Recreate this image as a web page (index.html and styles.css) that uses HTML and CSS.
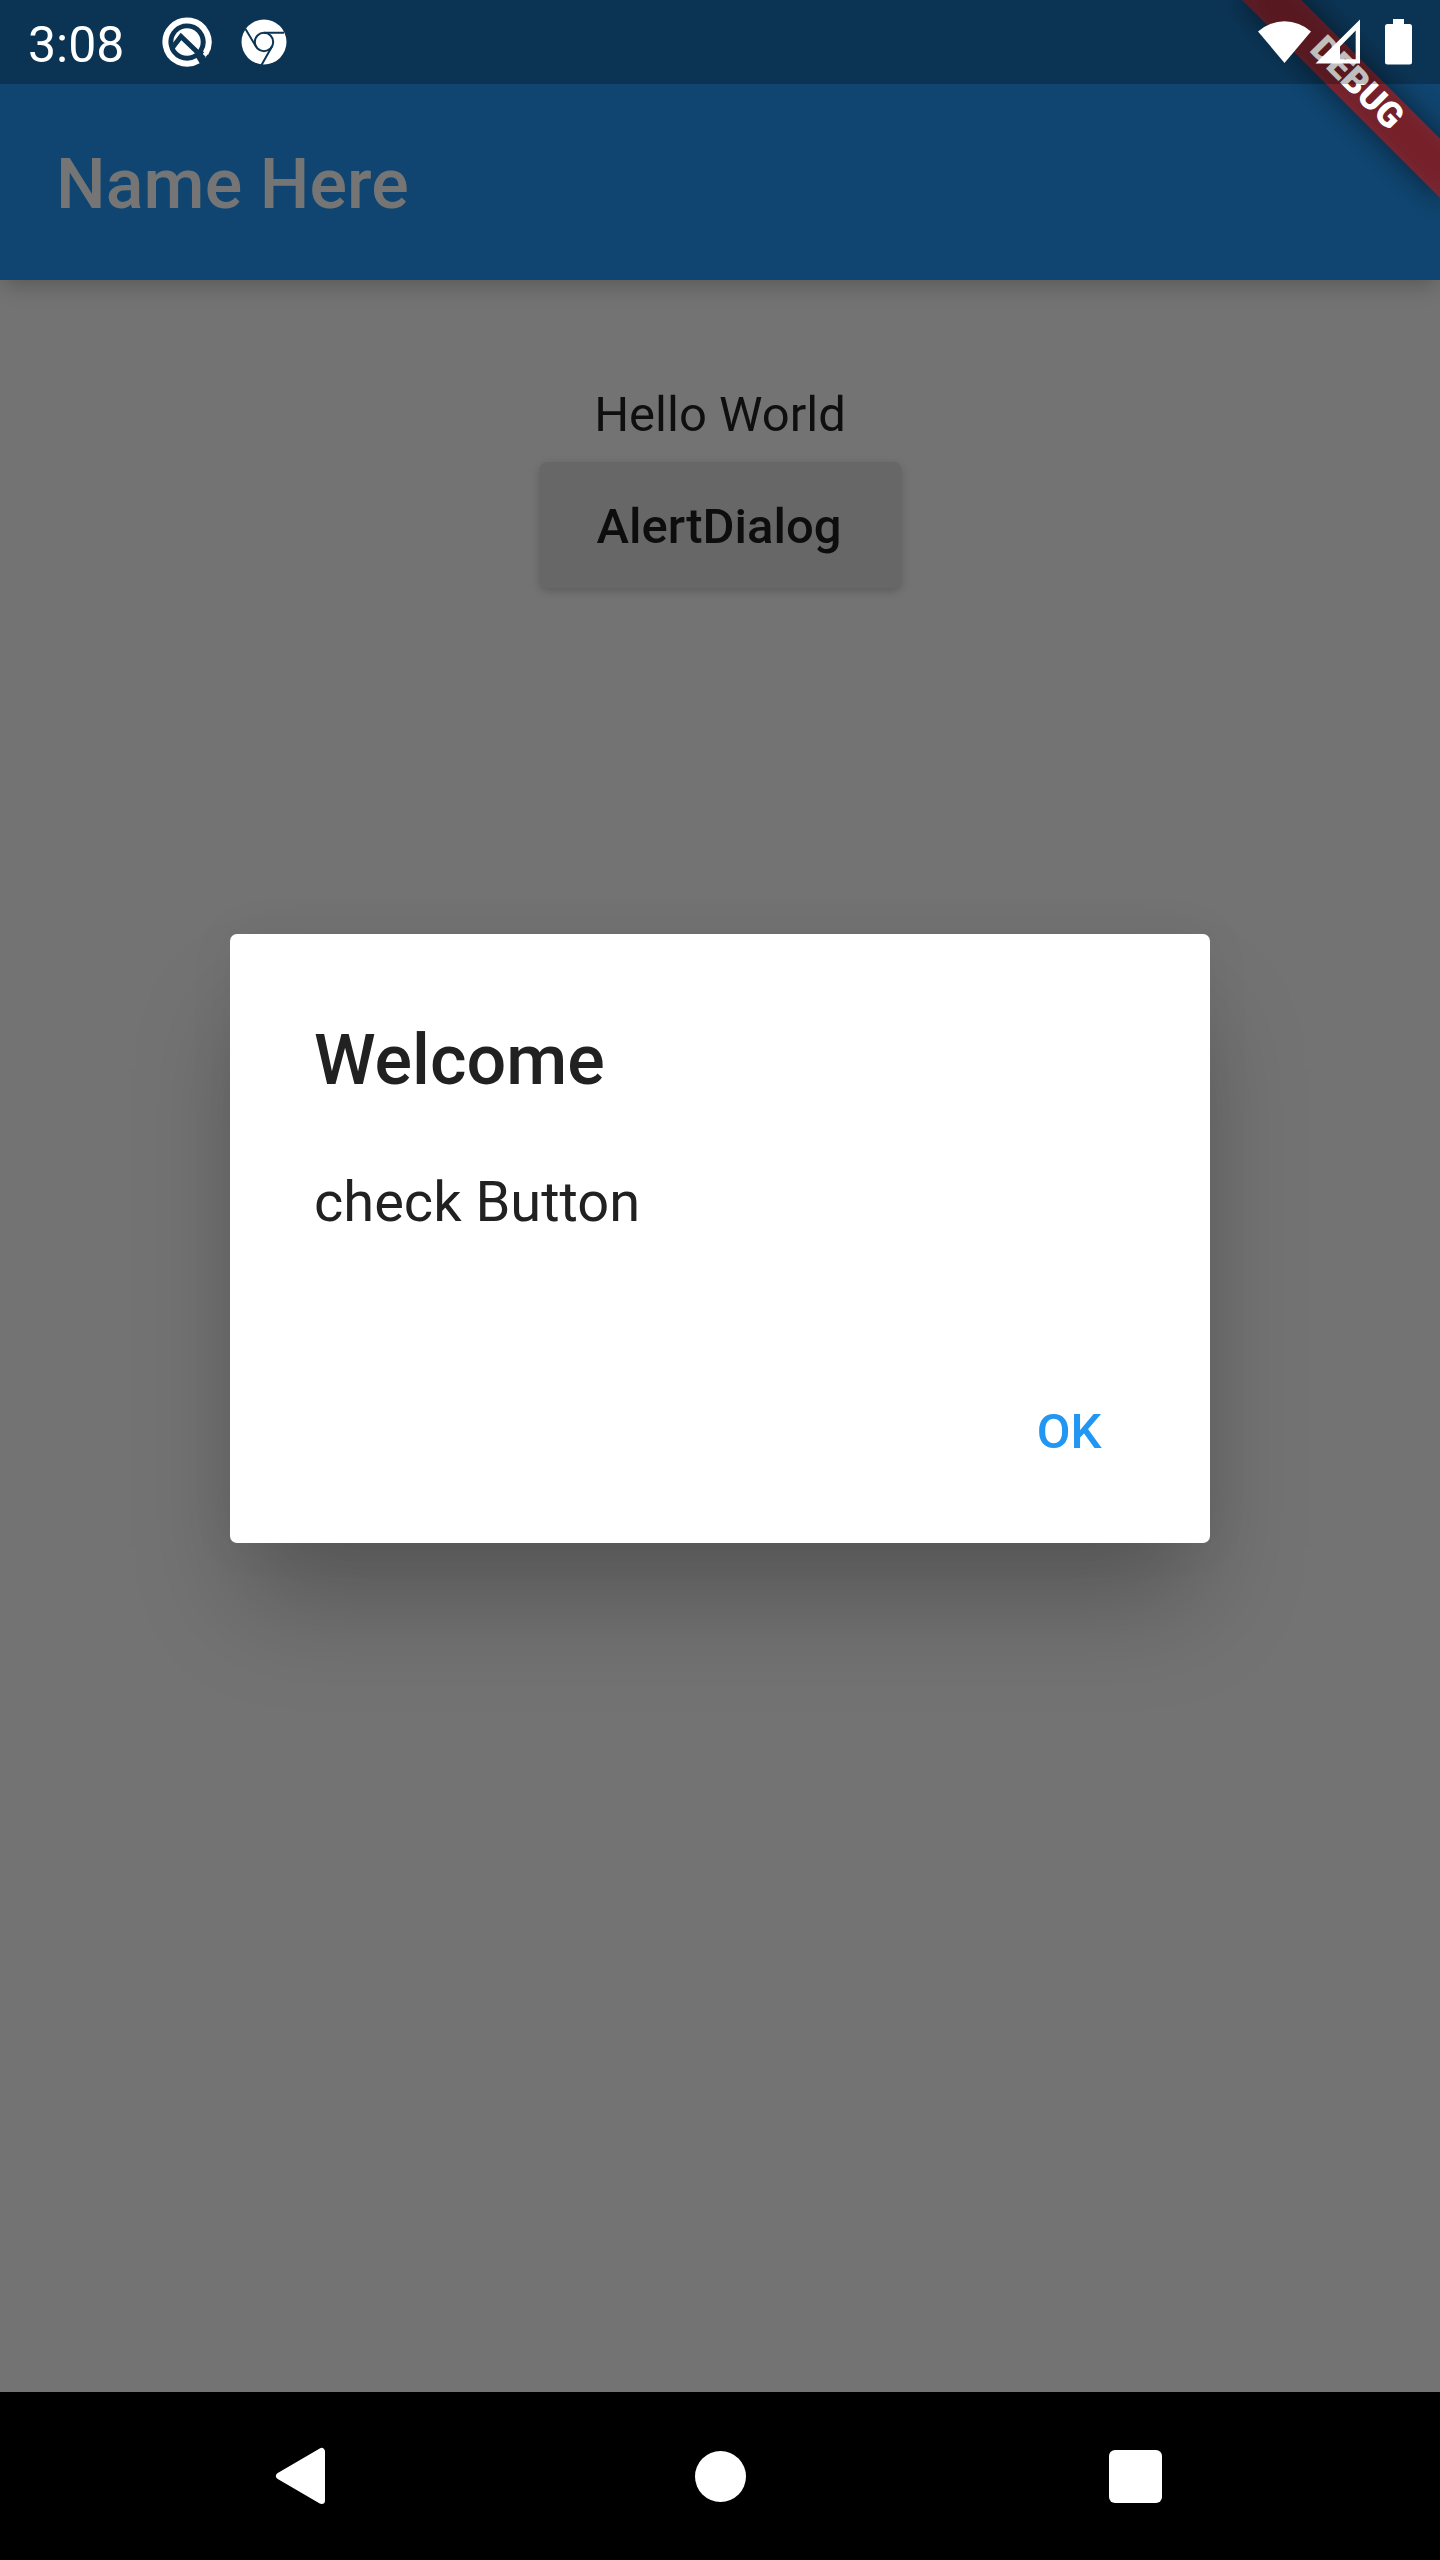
FILE: index.html
```html
<!DOCTYPE html>
<html lang="en">
<head>
<meta charset="utf-8">
<title>Name Here</title>
<link rel="stylesheet" href="styles.css">
</head>
<body>
<div class="device">
  <div class="app">
    <header class="app-bar"><h1 class="app-title">Name Here</h1></header>
    <main class="content">
      <p class="greeting">Hello World</p>
      <button class="raised-button">AlertDialog</button>
    </main>
    <div class="barrier">
      <section class="dialog">
        <h2 class="dialog-title">Welcome</h2>
        <p class="dialog-text">check Button</p>
        <div class="dialog-actions"><button class="flat-button">OK</button></div>
      </section>
    </div>
    <div class="banner-shadow"></div>
    <div class="banner">DEBUG</div>
    <div class="status-bar">
      <span class="clock">3:08</span>
      <svg class="q-icon" viewBox="0 0 50 50" width="50" height="50">
        <path d="M36.1 43.6A21.6 21.6 0 1 1 43.6 36.1" fill="none" stroke="#fff" stroke-width="6"/>
        <path d="M40 38L43 41L46 37L43 34Z" fill="#fff"/>
        <circle cx="25" cy="25" r="13.7" fill="#fff"/>
        <path d="M10.500 30.500L19 19.500L42 41.500" fill="none" stroke="#0c3453" stroke-width="5"/>
      </svg>
      <svg class="chrome-icon" viewBox="0 0 46 46" width="46" height="46">
        <circle cx="23" cy="23" r="22.500" fill="#fff"/>
        <circle cx="23" cy="23" r="9.200" fill="none" stroke="#0c3453" stroke-width="2"/>
        <path d="M23 13.800H43M15 27.600L4.500 10M31 27.600L20.500 46" fill="none" stroke="#0c3453" stroke-width="2"/>
      </svg>
      <svg class="system-icons" viewBox="0 0 154 46" width="154" height="46">
        <path d="M0 12.400A40 40 0 0 1 53 12.400L26.500 44Z" fill="#fff"/>
        <path d="M102 .5V44.500H57.500ZM97.700 11.500L82 27.500V40.300H97.700Z" fill="#fff" fill-rule="evenodd"/>
        <path d="M135 0H146V5H151.500Q154 5 154 7.500V43Q154 45.500 151.500 45.500H129.500Q127 45.500 127 43V7.500Q127 5 129.500 5H135Z" fill="#fff"/>
      </svg>
    </div>
  </div>
  <nav class="nav-bar">
    <svg class="nav-back" viewBox="0 0 50 58" width="50" height="58"><path d="M4.500 29L46.500 4.500V53.500Z" fill="#fff" stroke="#fff" stroke-width="7" stroke-linejoin="round"/></svg>
    <span class="nav-home"></span>
    <span class="nav-recents"></span>
  </nav>
</div>
</body>
</html>
```

FILE: styles.css
```css
* { box-sizing: border-box; margin: 0; padding: 0; }
body { font-family: Roboto, sans-serif; }
.device { width: 1440px; height: 2560px; display: flex; flex-direction: column; background: #000; }
.app { flex: 1; position: relative; overflow: hidden; display: flex; flex-direction: column; background: #fafafa; }
.app-bar {
  height: 280px; padding: 88px 56px 0; display: flex; align-items: center;
  background: #2196f3; position: relative;
  box-shadow: 0 9px 21px -4px rgba(0,0,0,.23);
}
.app-title { font-size: 70px; font-weight: 500; line-height: 82px; letter-spacing: .1px; color: #fff; }
.content { display: flex; flex-direction: column; align-items: center; padding-top: 107px; }
.greeting { font-size: 49px; line-height: 56px; color: rgba(0,0,0,.87); }
.raised-button {
  margin-top: 19px; height: 126px; width: 361px; padding: 3px 2px 0 0; border: 0; border-radius: 7px; background: #e0e0e0;
  font: 500 49px/56px Roboto, sans-serif; color: rgba(0,0,0,.87);
  box-shadow: 0 3px 10px rgba(0,0,0,.2);
}
.barrier {
  position: absolute; inset: 0; padding-top: 84px; display: flex; align-items: center; justify-content: center;
  background: rgba(0,0,0,.54);
}
.dialog {
  width: 980px; height: 609px; padding: 85px 0 27px; border-radius: 7px; background: #fff;
  color: #212121; display: flex; flex-direction: column;
  box-shadow: 0 70px 100px -15px rgba(0,0,0,.25), 0 0 50px rgba(0,0,0,.05);
}
.dialog-title { padding: 0 84px; font-size: 70px; font-weight: 500; line-height: 82px; }
.dialog-text { padding: 0 84px; margin-top: 69px; font-size: 56px; line-height: 65px; }
.dialog-actions { margin-top: auto; padding-right: 29px; height: 168px; display: flex; align-items: center; justify-content: flex-end; }
.flat-button {
  width: 224px; height: 126px; border: 0; background: none; color: #2196f3;
  font: 500 49px/56px Roboto, sans-serif;
}
.banner, .banner-shadow {
  position: absolute; left: 1300px; top: 98px; width: 280px; height: 42px;
  transform-origin: 140px -98px; transform: rotate(45deg);
}
.banner-shadow { background: rgba(0,0,0,.5); filter: blur(13.9px); }
.banner {
  background: rgba(183,28,28,.627); color: #fff; text-align: center;
  font-size: 35.7px; font-weight: 900; line-height: 39px;
}
.status-bar {
  position: absolute; top: 0; left: 0; width: 100%; height: 84px; padding: 0 28px;
  display: flex; align-items: center; background: rgba(0,0,0,.25);
}
.clock { font-size: 50px; line-height: 58px; color: #fff; width: 134px; padding-top: 5px; }
.q-icon { margin-bottom: 1px; }
.chrome-icon { margin-left: 29px; }
.system-icons { margin-left: auto; }
.nav-bar { height: 168px; display: flex; align-items: center; padding: 0 278px 0 275px; }
.nav-home { width: 51px; height: 51px; margin-left: 369.5px; border-radius: 50%; background: #fff; }
.nav-recents { width: 53px; height: 53px; margin-left: auto; border-radius: 6px; background: #fff; }
```
